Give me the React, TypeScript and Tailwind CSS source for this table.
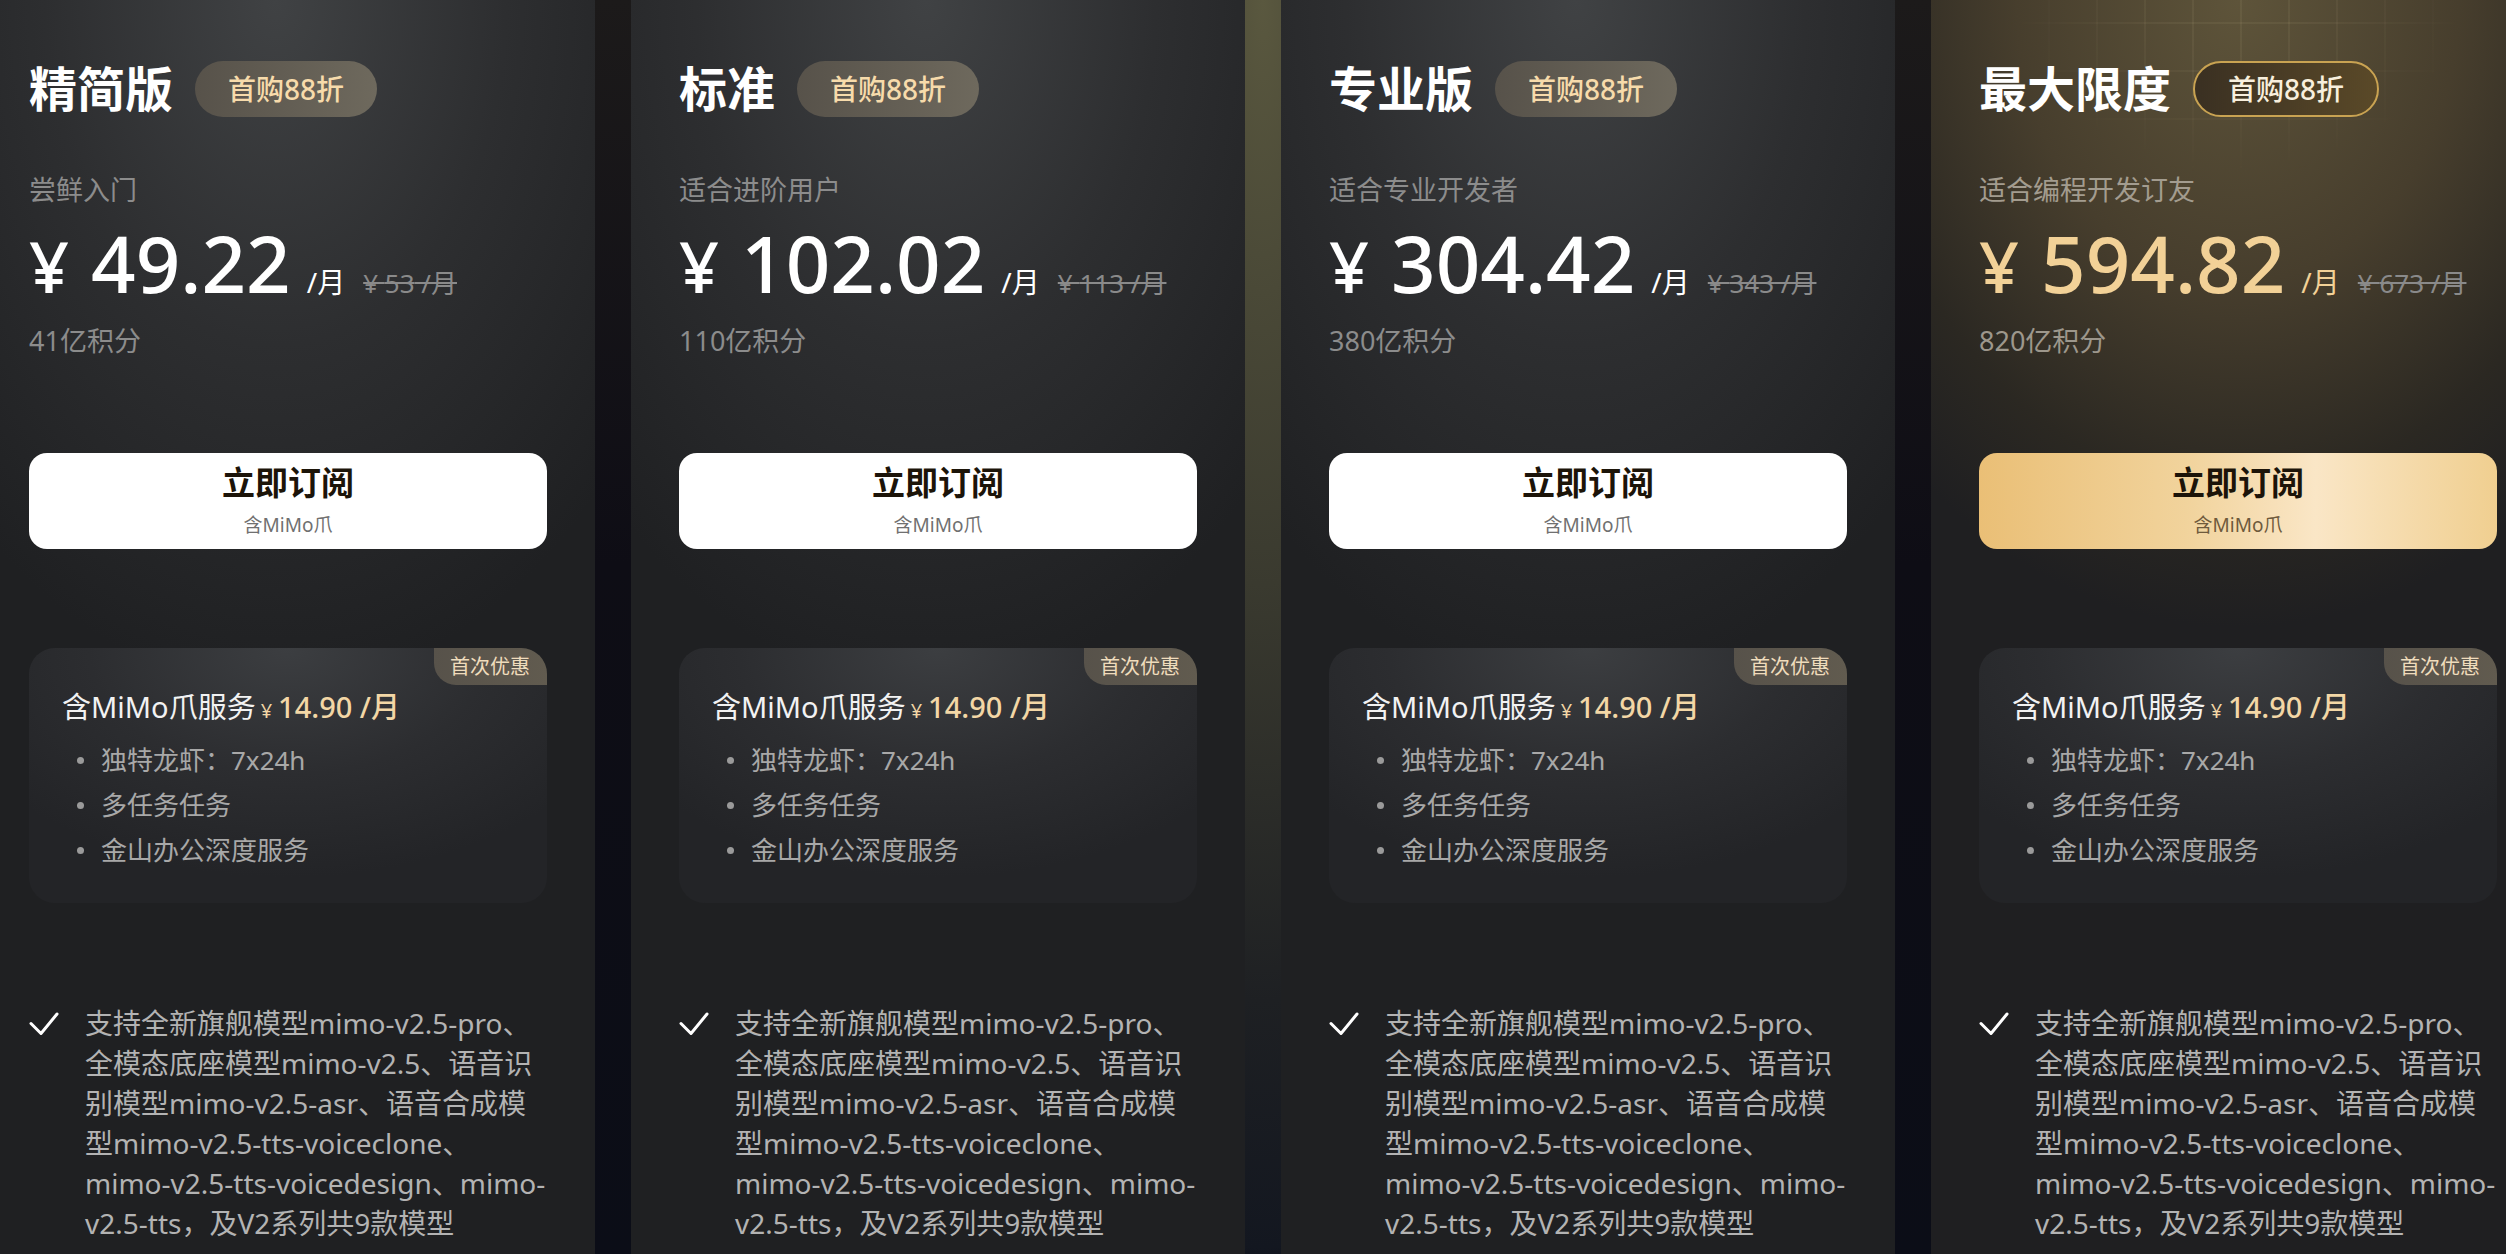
import React from 'react';
import clsx from 'clsx';

interface Plan {
  name: string;
  desc: string;
  price: string;
  original: string;
  credits: string;
  featured?: boolean;
}

const plans: Plan[] = [
  { name: '精简版', desc: '尝鲜入门', price: '49.22', original: '53', credits: '41亿积分' },
  { name: '标准', desc: '适合进阶用户', price: '102.02', original: '113', credits: '110亿积分' },
  { name: '专业版', desc: '适合专业开发者', price: '304.42', original: '343', credits: '380亿积分' },
  { name: '最大限度', desc: '适合编程开发订友', price: '594.82', original: '673', credits: '820亿积分', featured: true },
];

const perks = ['独特龙虾：7x24h', '多任务任务', '金山办公深度服务'];

const featureText =
  '支持全新旗舰模型mimo-v2.5-pro、全模态底座模型mimo-v2.5、语音识别模型mimo-v2.5-asr、语音合成模型mimo-v2.5-tts-voiceclone、mimo-v2.5-tts-voicedesign、mimo-v2.5-tts，及V2系列共9款模型';

function CheckIcon() {
  return (
    <svg width="30" height="24" viewBox="0 0 30 24" fill="none" className="mt-[9px] shrink-0">
      <polyline
        points="2,11.5 12,21.5 28,2"
        stroke="#ffffff"
        strokeWidth="3"
        strokeLinecap="round"
        strokeLinejoin="round"
      />
    </svg>
  );
}

function PlanCard({ plan }: { plan: Plan }) {
  const { featured } = plan;

  return (
    <div
      className={clsx(
        'relative w-[614px] h-full shrink-0 overflow-hidden px-12 pt-[61px]',
        featured
          ? 'bg-[radial-gradient(ellipse_80%_50%_at_50%_0%,#5e543a_0%,#473e2d_45%,#2b2822_78%,#1f1f21_100%)]'
          : 'bg-[radial-gradient(ellipse_75%_55%_at_48%_0%,#404244_0%,#2d2e30_50%,#1f2022_100%)]'
      )}
    >
      {/* gold grid glow on the top plan */}
      {featured && (
        <div className="absolute inset-x-0 top-0 h-[300px] pointer-events-none bg-[linear-gradient(to_right,rgba(255,236,190,0.06)_2px,transparent_2px),linear-gradient(to_bottom,rgba(255,236,190,0.06)_2px,transparent_2px)] bg-[size:48px_48px] bg-[position:21px_22px] [mask-image:radial-gradient(ellipse_45%_70%_at_50%_0%,black_25%,transparent_85%)]" />
      )}

      <div className="relative">
        {/* Header */}
        <div className="flex items-center gap-[22px]">
          <h2 className="text-[48px] leading-[56px] font-bold text-white">{plan.name}</h2>
          <span
            className={clsx(
              'h-[56px] px-[33px] rounded-full flex items-center text-[28px] font-medium',
              featured
                ? 'border-2 border-[#c9a352] bg-[linear-gradient(90deg,#3a3022,#5a4928)] text-[#f8efdd]'
                : 'bg-[linear-gradient(90deg,#57524a,#6e695d)] text-[#f7dbab]'
            )}
          >
            首购88折
          </span>
        </div>

        <p className={clsx('mt-[55px] text-[27px] leading-[36px]', featured ? 'text-[#a39c8f]' : 'text-[#8c8c8c]')}>
          {plan.desc}
        </p>

        {/* Price */}
        <div className={clsx('mt-[16px] flex items-baseline', featured ? 'text-[#f2d197]' : 'text-white')}>
          <span className="text-[70px] leading-none font-medium mr-[22px]">¥</span>
          <span className="text-[78px] leading-none font-medium">{plan.price}</span>
          <span className="ml-[16px] text-[28px] leading-none">/月</span>
          <span className="ml-[18px] text-[26px] leading-none text-[#8a8a8a] line-through decoration-[#8a8a8a]">
            ¥ {plan.original} /月
          </span>
        </div>

        <p className={clsx('mt-[21px] text-[27px] leading-[36px]', featured ? 'text-[#9d978c]' : 'text-[#8c8c8c]')}>
          {plan.credits}
        </p>

        {/* Subscribe button */}
        <button
          className={clsx(
            'mt-[94px] w-full h-[96px] rounded-[18px] flex flex-col items-center justify-center',
            featured
              ? 'bg-[linear-gradient(90deg,#eabf76_0%,#f1d39c_40%,#fae6c6_65%,#f0cf90_100%)]'
              : 'bg-white'
          )}
        >
          <span className="text-[33px] leading-[36px] font-bold text-[#1c1409]">立即订阅</span>
          <span className={clsx('mt-[12px] text-[19px] leading-[24px]', featured ? 'text-[#6e5a3c]' : 'text-[#707070]')}>
            含MiMo爪
          </span>
        </button>

        {/* MiMo claw service */}
        <div className="relative mt-[99px] h-[255px] rounded-[26px] overflow-hidden bg-[radial-gradient(ellipse_70%_90%_at_50%_0%,#3c3e41_0%,#2c2d30_55%,#232427_100%)] pl-[33px] pt-[39px]">
          <span className="absolute right-0 top-0 h-[37px] pl-[16px] pr-[17px] flex items-center rounded-bl-[22px] bg-[linear-gradient(90deg,#57524a,#615b4f)] text-[20px] text-[#efdcbc]">
            首次优惠
          </span>
          <p className="flex items-baseline text-[29px] leading-[40px]">
            <span className="text-[#f2f2f2]">含MiMo爪服务</span>
            <span className="ml-[5px] text-[20px] text-[#f3d7a6]">¥</span>
            <span className="ml-[6px] text-[#f3d7a6] font-medium">14.90 /月</span>
          </p>
          <ul className="mt-[7px]">
            {perks.map((perk) => (
              <li key={perk} className="flex items-center text-[26px] leading-[45px] text-[#a8a8a8]">
                <span className="ml-[15px] w-[7px] h-[7px] rounded-full bg-[#9a9a9a]" />
                <span className="ml-[17px]">{perk}</span>
              </li>
            ))}
          </ul>
        </div>

        {/* Features */}
        <div className="mt-[100px] flex items-start gap-[26px]">
          <CheckIcon />
          <p className="flex-1 text-[28px] leading-[40px] text-[#b3b3b3]">{featureText}</p>
        </div>
      </div>
    </div>
  );
}

export default function App() {
  return (
    <div className="relative w-[2506px] h-[1254px] overflow-hidden font-['Noto_Sans','Noto_Sans_CJK_SC',sans-serif] bg-[radial-gradient(ellipse_300px_1300px_at_1263px_0px,#5a583f_0%,#3a3a2f_45%,#1e2023_77%,#131720_96%,transparent_100%),linear-gradient(180deg,#1c1a1a_0%,#0e0d15_45%,#0b0d17_100%)]">
      <div className="flex h-full ml-[-19px] gap-[36px]">
        {plans.map((plan) => (
          <PlanCard key={plan.name} plan={plan} />
        ))}
      </div>
    </div>
  );
}
